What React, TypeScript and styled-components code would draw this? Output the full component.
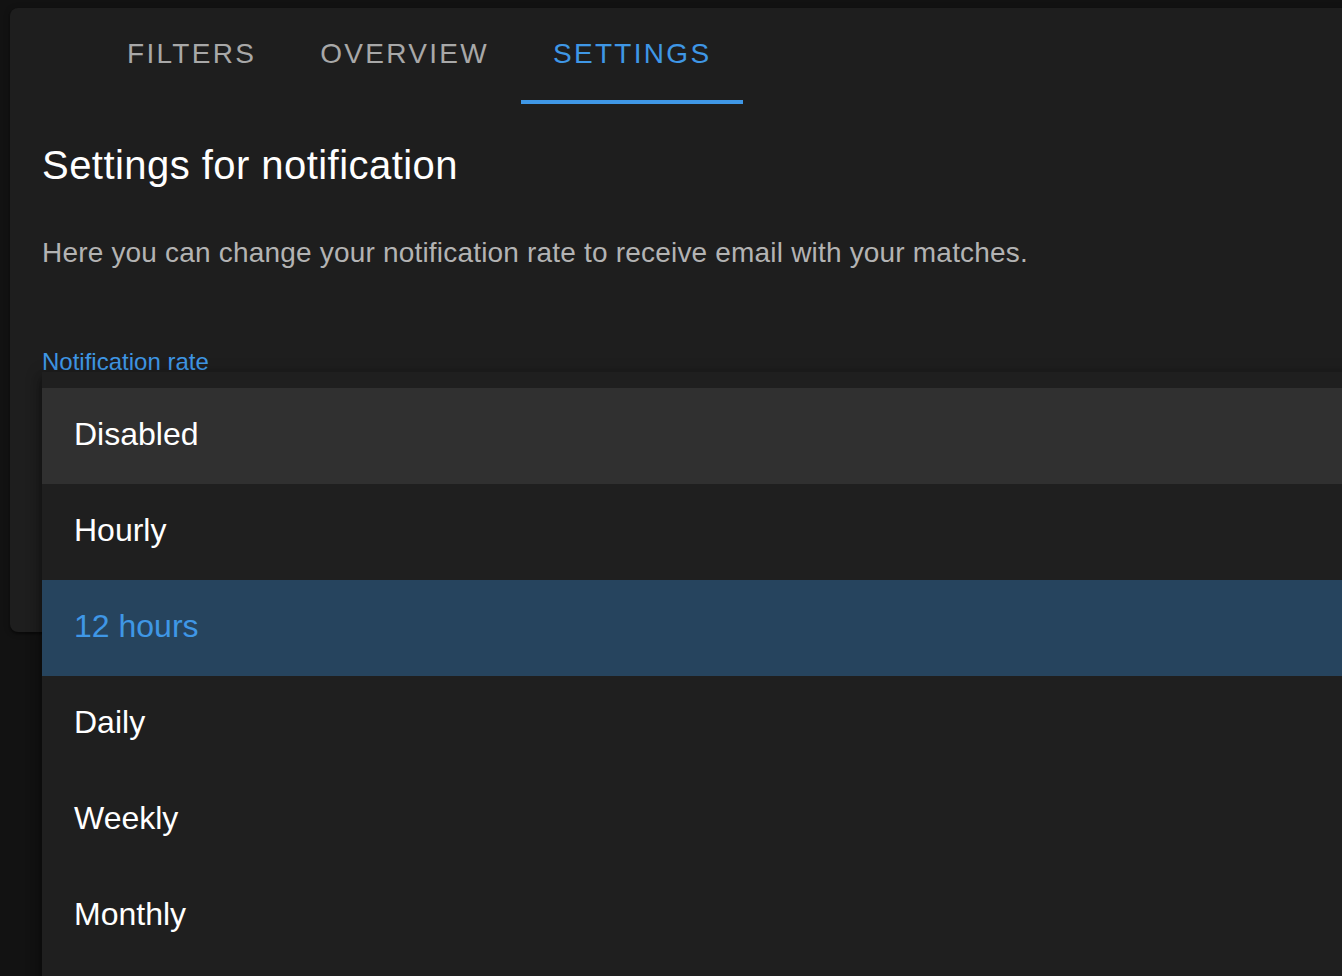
import React, { useState } from 'react';
import styled, { createGlobalStyle } from 'styled-components';

const GlobalStyle = createGlobalStyle`
  html, body {
    margin: 0;
    padding: 0;
    background: #121212;
    overflow: hidden;
    font-family: 'Liberation Sans', Arial, Helvetica, sans-serif;
  }
  * {
    box-sizing: border-box;
  }
`;

const Page = styled.div`
  position: relative;
  height: 976px;
  padding: 8px 0 0 10px;
`;

const Card = styled.div`
  height: 624px;
  margin-right: -24px;
  background: #1e1e1e;
  border-radius: 8px;
  box-shadow: 0 2px 2px rgba(0, 0, 0, 0.35), 0 1px 6px rgba(0, 0, 0, 0.25);
  display: flex;
  flex-direction: column;
`;

const TabBar = styled.div`
  display: flex;
  height: 96px;
  padding-left: 85px;
`;

const Tab = styled.div<{ $active?: boolean }>`
  height: 96px;
  padding: 30px 32px 0;
  font-size: 28px;
  line-height: 32px;
  letter-spacing: 2.3px;
  text-transform: uppercase;
  color: ${(p) => (p.$active ? '#3f97e6' : '#a8a8a8')};
  box-shadow: ${(p) => (p.$active ? 'inset 0 -4px 0 #3f97e6' : 'none')};
  cursor: pointer;
`;

const Content = styled.div`
  padding: 0 32px;
`;

const Heading = styled.h2`
  margin: 37px 0 0;
  font-size: 40px;
  line-height: 48px;
  font-weight: 400;
  letter-spacing: 0.45px;
  color: #ffffff;
`;

const Description = styled.p`
  margin: 44px 0 0;
  font-size: 28px;
  line-height: 40px;
  letter-spacing: 0.19px;
  color: #b3b3b3;
`;

const FieldLabel = styled.label`
  display: block;
  margin-top: 74px;
  font-size: 24px;
  line-height: 30px;
  color: #3f97e6;
`;

const MenuPaper = styled.ul`
  position: absolute;
  left: 42px;
  top: 372px;
  right: -20px;
  height: 640px;
  margin: 0;
  padding: 16px 0;
  list-style: none;
  background: #1f1f1f;
  box-shadow: 0 5px 5px -3px rgba(0, 0, 0, 0.3), 0 8px 10px 1px rgba(0, 0, 0, 0.24),
    0 3px 14px 2px rgba(0, 0, 0, 0.22);
`;

const MenuItem = styled.li<{ $selected?: boolean; $hover?: boolean }>`
  height: 96px;
  padding: 22px 32px 26px;
  font-size: 32px;
  line-height: 48px;
  color: ${(p) => (p.$selected ? '#3f97e6' : '#ffffff')};
  background: ${(p) =>
    p.$selected ? '#26445e' : p.$hover ? '#303030' : 'transparent'};
  cursor: pointer;
`;

const tabs = ['Filters', 'Overview', 'Settings'];
const rates = ['Disabled', 'Hourly', '12 hours', 'Daily', 'Weekly', 'Monthly'];

export default function App() {
  const [tab, setTab] = useState(2);
  const [rate, setRate] = useState('12 hours');
  const [hover, setHover] = useState('Disabled');

  return (
    <Page>
      <GlobalStyle />
      <Card>
        <TabBar>
          {tabs.map((t, i) => (
            <Tab key={t} $active={i === tab} onClick={() => setTab(i)}>
              {t}
            </Tab>
          ))}
        </TabBar>
        <Content>
          <Heading>Settings for notification</Heading>
          <Description>
            Here you can change your notification rate to receive email with your matches.
          </Description>
          <FieldLabel>Notification rate</FieldLabel>
        </Content>
      </Card>
      <MenuPaper>
        {rates.map((r) => (
          <MenuItem
            key={r}
            $selected={r === rate}
            $hover={r === hover}
            onMouseEnter={() => setHover(r)}
            onClick={() => setRate(r)}
          >
            {r}
          </MenuItem>
        ))}
      </MenuPaper>
    </Page>
  );
}
